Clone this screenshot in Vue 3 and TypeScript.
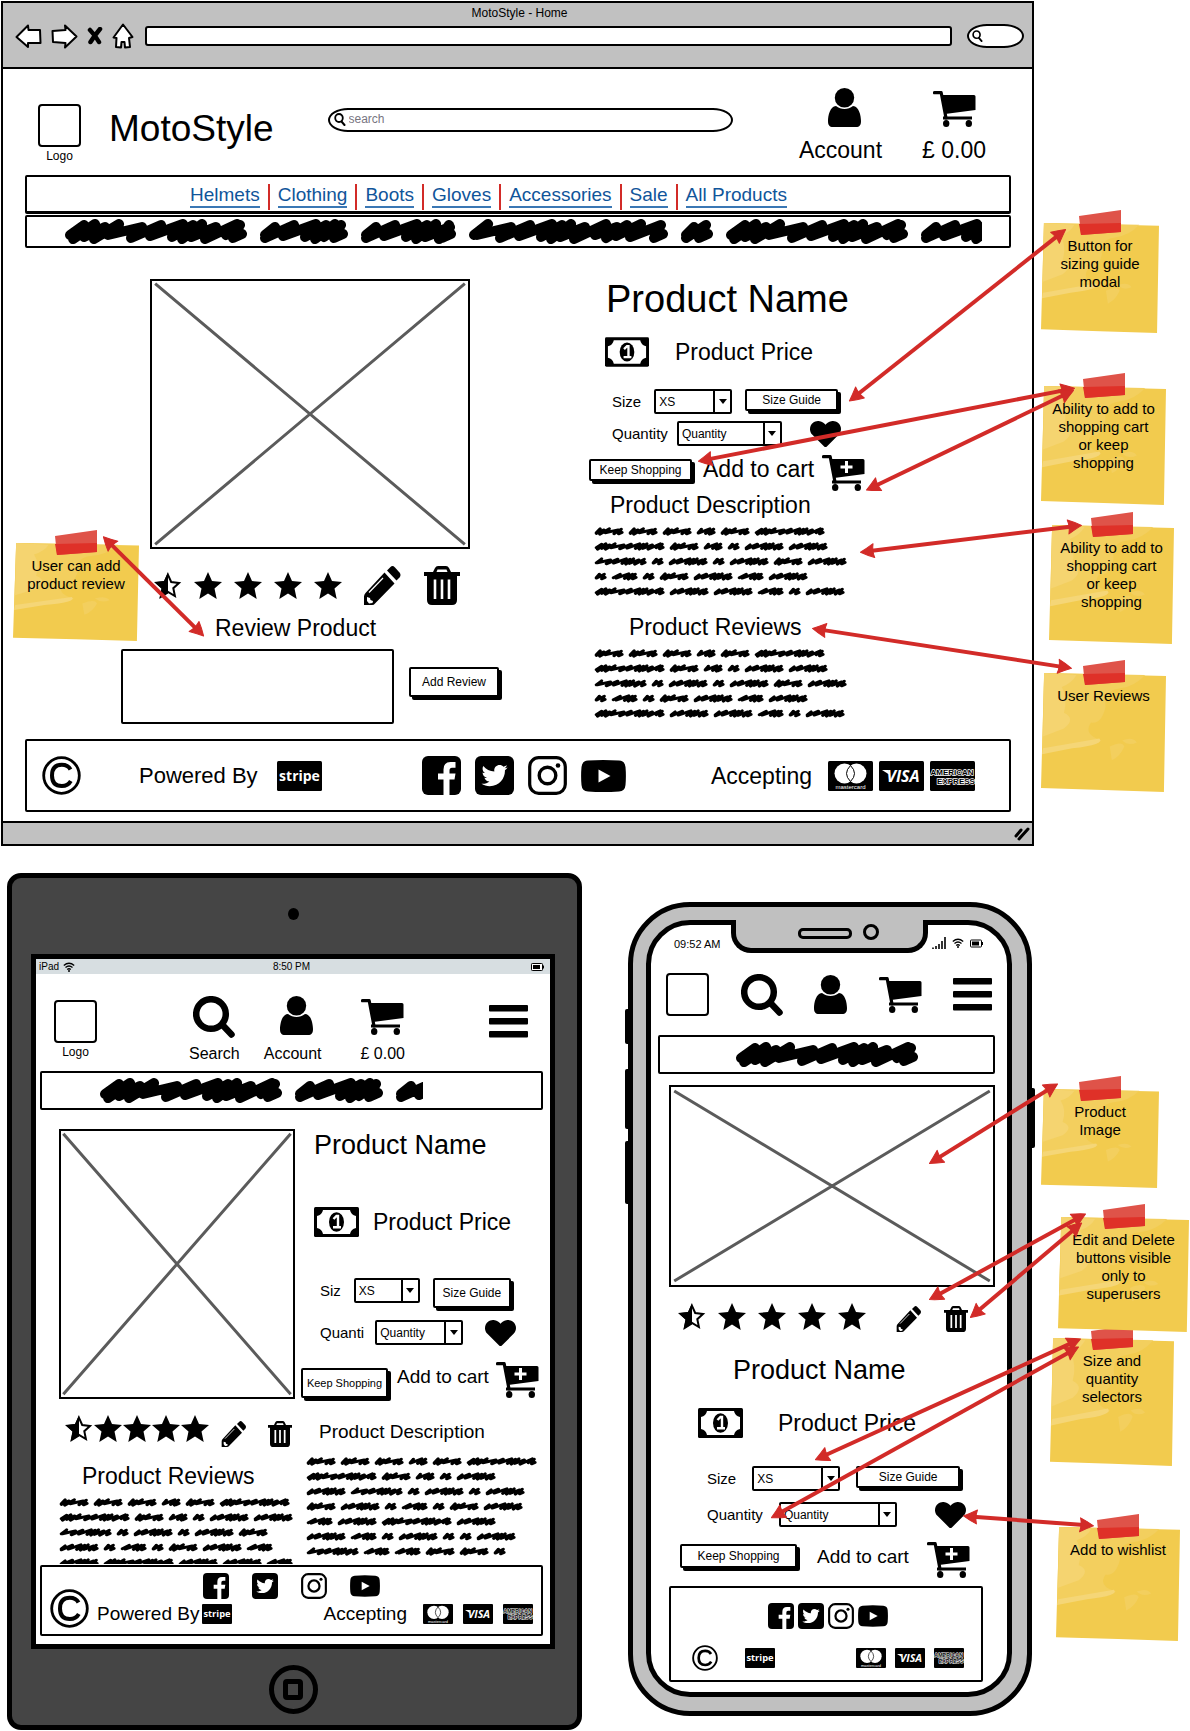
<script setup lang="ts">
import { h } from 'vue'
import type { FunctionalComponent } from 'vue'

interface Note {
  x: number
  y: number
  w: number
  h: number
  lines: string[]
}

const BOARD_WIDTH = 1190
const BOARD_HEIGHT = 1731

/* Inline icon taken from the sprite at the top of the template */
const Icon: FunctionalComponent<{ name: string; w: number; h: number }> = (p) =>
  h('svg', { width: p.w, height: p.h, 'aria-hidden': 'true', style: 'display:block;flex:none' }, [
    h('use', { href: `#i-${p.name}` }),
  ])
Icon.props = ['name', 'w', 'h']

/* Payment card: a black plate with the brand set in white */
const Card: FunctionalComponent<{ brand: string; small?: boolean }> = (p) => {
  const parts = [h('rect', { width: 45, height: 30, rx: 1.5 })]
  const label = (text: string, x: number, y: number, size: number, extra: Record<string, string | number> = {}) =>
    h(
      'text',
      { x, y, 'text-anchor': 'middle', 'font-size': size, 'font-weight': 700, fill: '#fff', 'font-family': 'Open Sans, sans-serif', ...extra },
      text,
    )
  if (p.brand === 'stripe') {
    parts.push(label('stripe', 22.5, 20, 14))
  } else if (p.brand === 'visa') {
    parts.push(h('path', { d: 'M3 9 H9 L11 14 Z', fill: '#fff' }), label('VISA', 24, 21, 16, { 'font-style': 'italic' }))
  } else if (p.brand === 'mastercard') {
    parts.push(
      h('circle', { cx: 16.5, cy: 12.5, r: 10, fill: '#fff' }),
      h('circle', { cx: 28.5, cy: 12.5, r: 10, fill: '#fff' }),
      h('path', { d: 'M22.500 4.500 Q14.500 12.500 22.500 20.500 Q30.500 12.500 22.500 4.500 Z', fill: '#fff', stroke: '#000' }),
      label('mastercard', 22.5, 28, 6, { 'font-weight': 400, 'font-family': 'Liberation Sans, sans-serif' }),
    )
  } else {
    const outlined = { fill: '#000', stroke: '#fff', 'stroke-width': 1.4, 'paint-order': 'stroke', 'font-family': 'Liberation Sans, sans-serif' }
    parts.push(label('AMERICAN', 22, 13.5, 8, outlined), label('EXPRESS', 26, 22.5, 8, outlined))
  }
  return h(
    'svg',
    { width: p.small ? 30 : 45, height: p.small ? 20 : 30, viewBox: '0 0 45 30', role: 'img', 'aria-label': p.brand, style: 'display:block;flex:none' },
    parts,
  )
}
Card.props = { brand: String, small: Boolean }

/* One scribbled word: a slanted zigzag drawn with a thick round pen */
const steps: number[] = [21, 11, 10, 14, 23, 19, 22, 10, 9, 14]
const tops: number[] = [5, 6, 5, 8, 5, 8, 6]
const bottoms: number[] = [18, 20, 18, 20, 16, 19, 17]
function scribblePath(width: number, seed: number): string {
  let d = 'M6 16'
  let x = width < 60 ? 14 : 24 - (seed % 3) * 4
  let i = seed
  while (x < width - 5) {
    d += ` L${x} ${tops[i % 7]} L${Math.max(6, x - 11)} ${bottoms[i % 7]}`
    x += steps[i % steps.length]
    i++
  }
  return `${d} L${width - 7} 6 L${width - 14} 19 L${width - 5} 15`
}
const Word: FunctionalComponent<{ w: number; small?: boolean }> = (p) => {
  const full = p.small ? Math.round(p.w * 2.6) : p.w
  return h(
    'svg',
    {
      width: p.w,
      height: p.small ? 9 : 25,
      viewBox: `0 0 ${full} 25`,
      preserveAspectRatio: 'none',
      'aria-hidden': 'true',
      style: 'display:block;flex:none',
    },
    [
      h('path', {
        d: scribblePath(full, p.w % 7),
        fill: 'none',
        stroke: '#000',
        'stroke-width': p.small ? 8 : 10,
        'stroke-linecap': 'round',
        'stroke-linejoin': 'round',
      }),
    ],
  )
}
Word.props = { w: Number, small: Boolean }

const Paragraph: FunctionalComponent<{ lines: number[][] }> = (p) =>
  h(
    'div',
    { role: 'presentation' },
    p.lines.map((line) =>
      h(
        'div',
        { style: 'display:flex;align-items:center;gap:4px;height:15px' },
        line.map((w) => h(Word, { w, small: true })),
      ),
    ),
  )
Paragraph.props = ['lines']

const links: string[] = ['Helmets', 'Clothing', 'Boots', 'Gloves', 'Accessories', 'Sale', 'All Products']

const desktopText: number[][] = [
  [30, 30, 30, 20, 30, 71],
  [71, 30, 20, 13, 40, 40],
  [53, 13, 40, 13, 40, 30, 40],
  [13, 27, 13, 30, 40, 27, 40],
  [71, 40, 40, 27, 13, 40],
]
const tabletText: number[][] = [
  [30, 30, 30, 20, 30, 71],
  [71, 30, 20, 13, 40],
  [40, 53, 13, 40, 13, 40],
  [30, 40, 13, 27, 13, 30, 40],
  [27, 40, 71, 40],
  [40, 27, 13, 40, 13, 13, 40],
  [53, 27, 27, 30, 30, 13],
]
const tabletReviews: number[][] = [
  [30, 30, 30, 20, 30, 71],
  [71, 30, 20, 13, 40, 40],
  [53, 13, 40, 13, 40, 30],
  [40, 13, 27, 13, 30, 40, 27],
  [40, 71, 40, 40, 27],
]

const notes: Note[] = [
  { x: 1041, y: 223, w: 118, h: 110, lines: ['Button for', 'sizing guide', 'modal'] },
  { x: 1041, y: 386, w: 125, h: 119, lines: ['Ability to add to', 'shopping cart', 'or keep', 'shopping'] },
  { x: 1049, y: 525, w: 125, h: 119, lines: ['Ability to add to', 'shopping cart', 'or keep', 'shopping'] },
  { x: 1041, y: 673, w: 125, h: 119, lines: ['User Reviews'] },
  { x: 13, y: 543, w: 126, h: 98, lines: ['User can add', 'product review'] },
  { x: 1041, y: 1089, w: 118, h: 99, lines: ['Product', 'Image'] },
  { x: 1050, y: 1338, w: 124, h: 128, lines: ['Size and', 'quantity', 'selectors'] },
  { x: 1058, y: 1217, w: 131, h: 115, lines: ['Edit and Delete', 'buttons visible', 'only to', 'superusers'] },
  { x: 1056, y: 1527, w: 124, h: 114, lines: ['Add to wishlist'] },
]

const arrowTips: number[][] = [
  [849, 401, 1066, 229],
  [698, 461, 1075, 388],
  [866, 490, 1074, 390],
  [860, 552, 1082, 525],
  [812, 628, 1072, 668],
  [103, 536, 204, 636],
  [929, 1163, 1058, 1083],
  [929, 1299, 1086, 1213],
  [970, 1317, 1082, 1222],
  [815, 1459, 1081, 1338],
  [771, 1517, 1079, 1346],
  [963, 1515, 1094, 1525],
]
/* The line stops inside each head so that the tip stays sharp */
const arrows = arrowTips.map(([x1, y1, x2, y2]) => {
  const len = Math.hypot(x2 - x1, y2 - y1)
  const ux = ((x2 - x1) / len) * 10
  const uy = ((y2 - y1) / len) * 10
  return { x1: x1 + ux, y1: y1 + uy, x2: x2 - ux, y2: y2 - uy }
})

function notePlace(n: Note) {
  return {
    left: `${(n.x / BOARD_WIDTH) * 100}%`,
    top: `${n.y}px`,
    width: `${n.w}px`,
    height: `${n.h}px`,
  }
}
</script>

<template>
  <main class="board">
    <svg class="sprite" width="0" height="0" aria-hidden="true">
      <symbol id="i-back" viewBox="0 0 27 25">
        <path d="M1.500 13 L13 1.500 L13.500 6 L25 6 L25.500 19 L13 19 L13 23 Z" fill="#fff" stroke="#000" stroke-width="2" stroke-linejoin="round" />
      </symbol>
      <symbol id="i-forward" viewBox="0 0 27 25">
        <path d="M25.500 12.500 L14 1.500 L14.500 6 L1.500 7 L2 18 L14.500 19 L14 23.500 Z" fill="#fff" stroke="#000" stroke-width="2" stroke-linejoin="round" />
      </symbol>
      <symbol id="i-stop" viewBox="0 0 16 18">
        <path d="M3 3 Q8 8 12 15 M13 2 Q8 8 3.500 15" fill="none" stroke="#000" stroke-width="4.500" stroke-linecap="round" />
      </symbol>
      <symbol id="i-home" viewBox="0 0 22 26">
        <path d="M11 1.500 L20.500 14 L17 15 L18 24 L13 24.500 L12.500 19 L9.500 19 L9 24.500 L4 24 L4.500 15 L1.500 14.500 Z" fill="#fff" stroke="#000" stroke-width="2" stroke-linejoin="round" />
      </symbol>
      <symbol id="i-lens" viewBox="0 0 12 13">
        <ellipse cx="5" cy="5" rx="3.800" ry="4" fill="none" stroke="#000" stroke-width="1.800" />
        <path d="M7.500 8.500 L10.500 12" stroke="#000" stroke-width="2" stroke-linecap="round" />
      </symbol>
      <symbol id="i-search" viewBox="0 0 42 42">
        <circle cx="18" cy="18" r="14.800" fill="none" stroke="#000" stroke-width="6.500" />
        <path d="M30 29.500 L38.500 38.500" stroke="#000" stroke-width="6.500" stroke-linecap="round" />
      </symbol>
      <symbol id="i-account" viewBox="0 0 33 39">
        <ellipse cx="16.500" cy="9.800" rx="9.700" ry="9.800" />
        <path d="M8 18 C2 18 0 28 0 33 C0 37 1.500 39 5 39 H28 C31.500 39 33 37 33 33 C33 28 31 18 25 18 C20 22 13 22 8 18 Z" />
      </symbol>
      <symbol id="i-cart" viewBox="0 0 43 36">
        <path d="M1.500 1.700 H8.200 L13 27" fill="none" stroke="#000" stroke-width="3.200" stroke-linecap="round" stroke-linejoin="round" />
        <path d="M8 4 H41 Q42.500 4 42.500 5.500 V19 L12 23 Z M10 25.500 H39 V28.500 H10 Z" />
        <ellipse cx="13.200" cy="32.500" rx="3.200" ry="3.500" />
        <ellipse cx="35.800" cy="32.500" rx="3.200" ry="3.500" />
      </symbol>
      <symbol id="i-cart-plus" viewBox="0 0 43 36">
        <use href="#i-cart" />
        <path d="M24.500 6 V18 M18.500 12 H30.500" stroke="#fff" stroke-width="3" />
      </symbol>
      <symbol id="i-menu" viewBox="0 0 39 33">
        <rect width="39" height="6.600" rx="1" />
        <rect y="13" width="39" height="6.600" rx="1" />
        <rect y="26" width="39" height="6.600" rx="1" />
      </symbol>
      <symbol id="i-star" viewBox="0 0 28 27">
        <path d="M14 0 L18 9 L28 10 L20.500 16.500 L22.700 27 L14 21.500 L5.300 27 L7.500 16.500 L0 10 L10 9 Z" />
      </symbol>
      <symbol id="i-star-half" viewBox="0 0 28 27">
        <path d="M14 2.800 L17.200 10 L25 11 L19.300 16.200 L20.900 24 L14 19.800 L7.100 24 L8.700 16.200 L3 11 L10.800 10 Z" fill="#fff" stroke="#000" stroke-width="2" />
        <path d="M14 0 V21.500 L5.300 27 L7.500 16.500 L0 10 L10 9 Z" />
      </symbol>
      <symbol id="i-pencil" viewBox="0 0 39 39">
        <path d="M24 4.500 L27.500 1 Q29.500 -1 32 1.500 L36.500 6.500 Q38.500 9 36.500 11.500 L33.500 14.500 Z" />
        <path d="M21.500 6.500 L31.500 17.500 L12 37.500 Q11 39 9 39 L1 39 L1 30.500 Q1 28.500 2.500 27 Z" />
        <path d="M6 26.500 L20 12" stroke="#fff" stroke-width="1.200" />
        <path d="M4 31 L7 32 L7.500 34 L10 35 L9.500 37 L6 37.500 L4 35 Z" fill="#fff" />
      </symbol>
      <symbol id="i-trash" viewBox="0 0 36 39">
        <path d="M0 6 H9 L11 2 Q12 0 14 0 H22 Q24 0 25 2 L27 6 H36 V10 H33 V34 Q33 39 28 39 H8 Q3 39 3 34 V10 H0 Z" />
        <path d="M12.500 6 L13.500 3.500 H22.500 L23.500 6 Z" fill="#fff" />
        <path d="M11 13.500 V33 M18 13.500 V33 M25 13.500 V33" stroke="#fff" stroke-width="2.600" />
      </symbol>
      <symbol id="i-heart" viewBox="0 32 512 448" preserveAspectRatio="none">
        <path d="M462.300 62.600C407.500 15.900 326 24.300 275.700 76.200L256 96.500l-19.700-20.300C186.100 24.300 104.500 15.900 49.700 62.600c-62.800 53.600-66.100 149.800-9.900 207.900l193.500 199.800c12.500 12.900 32.800 12.900 45.300 0l193.500-199.800c56.300-58.100 53-154.300-9.800-207.900z" />
      </symbol>
      <symbol id="i-money" viewBox="0 0 45 30">
        <rect width="45" height="30" rx="1.500" />
        <path d="M9 3 H36 Q37 8 42 9 V21 Q37 22 36 27 H9 Q8 22 3 21 V9 Q8 8 9 3 Z" fill="#fff" />
        <ellipse cx="22.500" cy="15" rx="7.500" ry="9.800" />
        <path d="M19.500 12 L22.500 9 H24 V20 M19 20.300 H27" fill="none" stroke="#fff" stroke-width="2.400" />
      </symbol>
      <symbol id="i-copyright" viewBox="0 0 39 39">
        <circle cx="19.500" cy="19.500" r="17.800" fill="none" stroke="#000" stroke-width="2.800" />
        <path d="M28.500 13.500 Q26 8.800 19.800 8.800 Q10 8.800 10 19.500 Q10 30 19.800 30 Q26 30 28.800 25" fill="none" stroke="#000" stroke-width="4" />
      </symbol>
      <symbol id="i-facebook" viewBox="0 0 39 39">
        <rect width="39" height="39" rx="6" />
        <path d="M21.500 39 V23.500 H16 V17.500 H21.500 V13.500 Q21.500 6 28.500 6 H33.500 V11.800 H30 Q27.500 11.800 27.500 14.500 V17.500 H33.500 L32.500 23.500 H27.500 V39 Z" fill="#fff" />
      </symbol>
      <symbol id="i-twitter" viewBox="0 0 39 39">
        <rect width="39" height="39" rx="6" />
        <path transform="translate(6.500 6.500) scale(0.051)" fill="#fff" d="M459.370 151.716c.325 4.548.325 9.097.325 13.645 0 138.720-105.583 298.558-298.558 298.558-59.452 0-114.680-17.219-161.137-47.106 8.447.974 16.568 1.299 25.340 1.299 49.055 0 94.213-16.568 130.274-44.832-46.132-.975-84.792-31.188-98.112-72.772 6.498.974 12.995 1.624 19.818 1.624 9.421 0 18.843-1.300 27.614-3.573-48.081-9.747-84.143-51.980-84.143-102.985v-1.299c13.969 7.797 30.214 12.670 47.431 13.319-28.264-18.843-46.781-51.005-46.781-87.391 0-19.492 5.197-37.360 14.294-52.954 51.655 63.675 129.300 105.258 216.365 109.807-1.624-7.797-2.599-15.918-2.599-24.040 0-57.828 46.782-104.934 104.934-104.934 30.213 0 57.502 12.670 76.670 33.137 23.715-4.548 46.456-13.320 66.599-25.340-7.798 24.366-24.366 44.833-46.132 57.827 21.117-2.273 41.584-8.122 60.426-16.243-14.292 20.791-32.161 39.308-52.628 54.253z" />
      </symbol>
      <symbol id="i-instagram" viewBox="0 0 39 39">
        <rect x="1.700" y="1.700" width="35.600" height="35.600" rx="9" fill="none" stroke="#000" stroke-width="3.200" />
        <circle cx="19.500" cy="19.500" r="8.300" fill="none" stroke="#000" stroke-width="3.400" />
        <circle cx="30" cy="9.500" r="2.300" />
      </symbol>
      <symbol id="i-youtube" viewBox="0 0 45 32">
        <path d="M7 .500 Q22 -.500 38 .500 Q44 1 44.500 7 Q45.300 16 44.500 25 Q44 31 38 31.500 Q22 32.500 7 31.500 Q1 31 .500 25 Q-.300 16 .500 7 Q1 1 7 .500 Z" />
        <path d="M17.500 9.500 L29.500 16 L17.500 22.500 Z" fill="#fff" />
      </symbol>
      <symbol id="i-wifi" viewBox="0 0 12 10">
        <path d="M.800 3.500 Q6 -1 11.200 3.500 M2.500 5.500 Q6 2.500 9.500 5.500 M4.200 7.500 Q6 6 7.800 7.500" fill="none" stroke="#000" stroke-width="1.300" />
        <circle cx="6" cy="9" r="1" />
      </symbol>
      <symbol id="i-battery" viewBox="0 0 13 8">
        <rect x=".500" y=".500" width="11" height="7" rx=".800" fill="#fff" stroke="#000" />
        <rect x="2" y="2" width="7" height="4" />
        <path d="M12.500 2.500 V5.500" stroke="#000" />
      </symbol>
      <symbol id="i-signal" viewBox="0 0 14 12">
        <path d="M1 10.500 V12 M4 9 V12 M7 7 V12 M10 4 V12 M13 0 V12" stroke="#000" stroke-width="1.600" />
      </symbol>
    </svg>

    <section class="browser" aria-label="Desktop wireframe">
      <header class="chrome">
        <div class="chrome-title">MotoStyle - Home</div>
        <div class="toolbar">
          <button class="bare" aria-label="Back"><Icon name="back" :w="27" :h="25" /></button>
          <button class="bare" aria-label="Forward"><Icon name="forward" :w="27" :h="25" /></button>
          <button class="bare" aria-label="Stop"><Icon name="stop" :w="16" :h="18" /></button>
          <button class="bare" aria-label="Home"><Icon name="home" :w="22" :h="26" /></button>
          <input class="address" type="text" aria-label="Address" />
          <label class="chrome-search"><Icon name="lens" :w="11" :h="12" /><input type="text" aria-label="Web search" /></label>
        </div>
      </header>

      <div class="page">
        <header class="masthead">
          <div class="logo"><div class="logo-box"></div>Logo</div>
          <h1 class="brand">MotoStyle</h1>
          <label class="search"><Icon name="lens" :w="12" :h="13" /><input type="text" placeholder="search" aria-label="Search" /></label>
          <div class="tool account"><Icon name="account" :w="33" :h="39" /><span>Account</span></div>
          <div class="tool basket"><Icon name="cart" :w="43" :h="36" /><span>£ 0.00</span></div>
        </header>

        <nav class="frame nav">
          <a v-for="link in links" :key="link" href="#"><span>{{ link }}</span></a>
        </nav>
        <div class="frame banner">
          <div class="banner-text">
            <Word v-for="(w, i) in [183, 89, 96, 200, 33, 183, 96]" :key="i" :w="w" />
          </div>
        </div>

        <div class="product">
          <div class="gallery">
            <svg class="image" viewBox="0 0 100 100" preserveAspectRatio="none" role="img" aria-label="Product image">
              <path d="M1 1 L99 99 M99 1 L1 99" />
            </svg>
            <div class="rating">
              <Icon name="star-half" :w="28" :h="27" />
              <Icon v-for="n in 4" :key="n" name="star" :w="28" :h="27" />
              <button class="bare edit" aria-label="Edit"><Icon name="pencil" :w="39" :h="39" /></button>
              <button class="bare delete" aria-label="Delete"><Icon name="trash" :w="36" :h="39" /></button>
            </div>
            <h3 class="heading"><label for="review">Review Product</label></h3>
            <div class="review-form">
              <textarea id="review"></textarea>
              <button class="btn">Add Review</button>
            </div>
          </div>

          <div class="details">
            <h2 class="name">Product Name</h2>
            <div class="price"><Icon name="money" :w="44" :h="30" />Product Price</div>
            <div class="field">
              <label for="d-size">Size</label>
              <span class="select size"><select id="d-size"><option>XS</option></select><i></i></span>
              <button class="btn">Size Guide</button>
            </div>
            <div class="field quantity">
              <label for="d-qty">Quantity</label>
              <span class="select"><select id="d-qty"><option>Quantity</option></select><i></i></span>
              <button class="bare wish" aria-label="Add to wishlist"><Icon name="heart" :w="31" :h="26" /></button>
            </div>
            <div class="buy">
              <button class="btn">Keep Shopping</button>
              <span>Add to cart</span>
              <button class="bare" aria-label="Add to cart"><Icon name="cart-plus" :w="43" :h="36" /></button>
            </div>
            <h3 class="heading description">Product Description</h3>
            <Paragraph class="text" :lines="desktopText" />
            <h3 class="heading reviews">Product Reviews</h3>
            <Paragraph class="text" :lines="desktopText" />
          </div>
        </div>

        <footer class="frame footer">
          <div class="powered">
            <Icon name="copyright" :w="39" :h="39" />
            <span>Powered By</span>
            <Card brand="stripe" />
          </div>
          <div class="social">
            <Icon name="facebook" :w="39" :h="39" />
            <Icon name="twitter" :w="39" :h="39" />
            <Icon name="instagram" :w="39" :h="39" />
            <Icon name="youtube" :w="45" :h="32" />
          </div>
          <div class="accepting">
            <span>Accepting</span>
            <Card brand="mastercard" />
            <Card brand="visa" />
            <Card brand="amex" />
          </div>
        </footer>
      </div>
      <div class="status-strip">
        <svg width="16" height="14" viewBox="0 0 16 14" aria-hidden="true">
          <path d="M2 9 L7 3 M5 12 L14 2" stroke="#000" stroke-width="3" stroke-linecap="round" />
        </svg>
      </div>
    </section>

    <div class="devices">
      <section class="tablet" aria-label="Tablet wireframe">
        <div class="camera"></div>
        <div class="screen">
          <div class="status">
            <span class="carrier">iPad <Icon name="wifi" :w="12" :h="10" /></span>
            <span>8:50 PM</span>
            <span class="power"><Icon name="battery" :w="13" :h="8" /></span>
          </div>
          <header class="masthead">
            <div class="logo"><div class="logo-box"></div>Logo</div>
            <div class="tool find"><Icon name="search" :w="42" :h="42" /><span>Search</span></div>
            <div class="tool account"><Icon name="account" :w="33" :h="39" /><span>Account</span></div>
            <div class="tool basket"><Icon name="cart" :w="43" :h="36" /><span>£ 0.00</span></div>
            <button class="bare menu" aria-label="Menu"><Icon name="menu" :w="39" :h="33" /></button>
          </header>
          <div class="frame banner">
            <div class="banner-text"><Word v-for="w in [183, 89, 96]" :key="w" :w="w" /></div>
          </div>
          <div class="product">
            <div class="gallery">
              <svg class="image" viewBox="0 0 100 100" preserveAspectRatio="none" role="img" aria-label="Product image">
                <path d="M1 1 L99 99 M99 1 L1 99" />
              </svg>
              <div class="rating">
                <Icon name="star-half" :w="28" :h="27" />
                <Icon v-for="n in 4" :key="n" name="star" :w="28" :h="27" />
                <button class="bare edit" aria-label="Edit"><Icon name="pencil" :w="26" :h="26" /></button>
                <button class="bare delete" aria-label="Delete"><Icon name="trash" :w="24" :h="26" /></button>
              </div>
              <h3 class="heading">Product Reviews</h3>
              <Paragraph class="text" :lines="tabletReviews" />
            </div>
            <div class="details">
              <h2 class="name">Product Name</h2>
              <div class="price"><Icon name="money" :w="45" :h="30" />Product Price</div>
              <div class="field">
                <label for="t-size">Siz</label>
                <span class="select size"><select id="t-size"><option>XS</option></select><i></i></span>
                <button class="btn">Size Guide</button>
              </div>
              <div class="field quantity">
                <label for="t-qty">Quanti</label>
                <span class="select"><select id="t-qty"><option>Quantity</option></select><i></i></span>
                <button class="bare wish" aria-label="Add to wishlist"><Icon name="heart" :w="31" :h="26" /></button>
              </div>
              <div class="buy">
                <button class="btn">Keep Shopping</button>
                <span>Add to cart</span>
                <button class="bare" aria-label="Add to cart"><Icon name="cart-plus" :w="43" :h="36" /></button>
              </div>
              <h3 class="heading description">Product Description</h3>
              <Paragraph class="text" :lines="tabletText" />
            </div>
          </div>
          <footer class="frame footer">
            <Icon name="copyright" :w="39" :h="39" />
            <div class="footer-rows">
              <div class="social">
                <Icon name="facebook" :w="26" :h="26" />
                <Icon name="twitter" :w="26" :h="26" />
                <Icon name="instagram" :w="26" :h="26" />
                <Icon name="youtube" :w="30" :h="22" />
              </div>
              <div class="payments">
                <div class="payment-group by"><span>Powered By</span><Card brand="stripe" small /></div>
                <div class="payment-group">
                  <span class="accept">Accepting</span>
                  <Card brand="mastercard" small />
                  <Card brand="visa" small />
                  <Card brand="amex" small />
                </div>
              </div>
            </div>
          </footer>
        </div>
        <div class="home-key"><i></i></div>
      </section>

      <section class="phone" aria-label="Phone wireframe">
        <i class="side-key first"></i><i class="side-key second"></i><i class="side-key third"></i><i class="side-key lock"></i>
        <div class="screen">
          <div class="status">
            <span class="time">09:52 AM</span>
            <div class="notch"><i class="speaker"></i><i class="lens"></i></div>
            <span class="signals">
              <Icon name="signal" :w="14" :h="12" /><Icon name="wifi" :w="12" :h="10" /><Icon name="battery" :w="13" :h="9" />
            </span>
          </div>
          <header class="masthead">
            <div class="logo-box"></div>
            <Icon name="search" :w="42" :h="42" />
            <Icon name="account" :w="33" :h="39" />
            <Icon name="cart" :w="43" :h="36" />
            <button class="bare" aria-label="Menu"><Icon name="menu" :w="39" :h="33" /></button>
          </header>
          <div class="frame banner"><Word :w="183" /></div>
          <svg class="image" viewBox="0 0 100 100" preserveAspectRatio="none" role="img" aria-label="Product image">
            <path d="M1 2 L99 98 M99 2 L1 98" />
          </svg>
          <div class="rating">
            <Icon name="star-half" :w="28" :h="27" />
            <Icon v-for="n in 4" :key="n" name="star" :w="28" :h="27" />
            <button class="bare edit" aria-label="Edit"><Icon name="pencil" :w="26" :h="26" /></button>
            <button class="bare delete" aria-label="Delete"><Icon name="trash" :w="24" :h="26" /></button>
          </div>
          <h2 class="name">Product Name</h2>
          <div class="price"><Icon name="money" :w="45" :h="30" />Product Price</div>
          <div class="field">
            <label for="p-size">Size</label>
            <span class="select size"><select id="p-size"><option>XS</option></select><i></i></span>
            <button class="btn">Size Guide</button>
          </div>
          <div class="field quantity">
            <label for="p-qty">Quantity</label>
            <span class="select"><select id="p-qty"><option>Quantity</option></select><i></i></span>
            <button class="bare wish" aria-label="Add to wishlist"><Icon name="heart" :w="31" :h="26" /></button>
          </div>
          <div class="buy">
            <button class="btn">Keep Shopping</button>
            <span>Add to cart</span>
            <button class="bare" aria-label="Add to cart"><Icon name="cart-plus" :w="43" :h="36" /></button>
          </div>
          <footer class="frame footer">
            <div class="social">
              <Icon name="facebook" :w="26" :h="26" />
              <Icon name="twitter" :w="26" :h="26" />
              <Icon name="instagram" :w="26" :h="26" />
              <Icon name="youtube" :w="30" :h="22" />
            </div>
            <div class="payments">
              <Icon name="copyright" :w="26" :h="26" />
              <Card brand="stripe" small />
              <span class="cards">
                <Card brand="mastercard" small />
                <Card brand="visa" small />
                <Card brand="amex" small />
              </span>
            </div>
          </footer>
        </div>
      </section>
    </div>

    <aside v-for="(note, i) in notes" :key="i" class="note" :style="notePlace(note)">
      <svg class="paper" viewBox="0 0 120 120" preserveAspectRatio="none" aria-hidden="true">
        <path d="M3 0 L120 3 L118 120 L60 118 L0 116 Z" fill="#f2cb4e" />
        <path d="M3 0 L100 2 Q90 14 74 16 Q60 18 62 34 Q58 52 48 50 Q40 62 58 68 Q52 74 34 72 L1 82 Z" fill="#f3cf5e" />
        <path d="M3 0 L34 2 Q30 10 20 14 Q26 26 22 40 Q34 46 22 56 L2 64 Z" fill="#f5d470" />
        <path d="M2 76 L56 66 Q62 72 30 76 L1 82 Z" fill="#f5d677" />
        <path d="M66 74 Q78 68 80 74 Q76 84 68 88 Z M78 68 Q88 64 92 70 Q84 74 78 68 Z" fill="#f3cf5e" />
      </svg>
      <svg class="tape" width="42" height="25" viewBox="0 0 42 25" aria-hidden="true">
        <path d="M0 6 L42 0 L42 22 L2 25 Z" fill="#df5349" />
        <path d="M0 14 L42 13 L42 22 L2 25 Z" fill="#df3128" />
      </svg>
      <p><span v-for="line in note.lines" :key="line">{{ line }}</span></p>
    </aside>

    <svg class="arrows" :viewBox="`0 0 ${BOARD_WIDTH} ${BOARD_HEIGHT}`" preserveAspectRatio="none" aria-hidden="true">
      <marker id="head" viewBox="0 0 16 16" refX="6" refY="8" markerWidth="16" markerHeight="16" markerUnits="userSpaceOnUse" orient="auto-start-reverse">
        <path d="M2 1 Q9 4 15.500 8 Q9 11 2 15 Q4 8 2 1 Z" fill="#d22b28" stroke="#d22b28" stroke-linejoin="round" />
      </marker>
      <line v-for="(a, i) in arrows" :key="i" v-bind="a" marker-start="url(#head)" marker-end="url(#head)" />
    </svg>
  </main>
</template>

<style>
body {
  margin: 0;
  background: #fff;
}
</style>

<style scoped>
.board,
.board * {
  box-sizing: border-box;
}
.board {
  position: relative;
  padding: 1px 0 2px 1px;
  overflow: hidden;
  background: #fff;
  color: #000;
  font-family: "Liberation Sans", Arial, sans-serif;
}
.sprite {
  position: absolute;
}
h1,
h2,
h3,
p {
  margin: 0;
  font-weight: 400;
}
button,
input,
select,
textarea {
  font: inherit;
  color: inherit;
}
.bare {
  flex: none;
  padding: 0;
  border: 0;
  background: none;
}
input {
  min-width: 0;
  padding: 0;
  border: 0;
  background: none;
  outline: 0;
}

/* Parts shared by the three devices */
.frame {
  border: 2px solid #000;
  border-radius: 2px;
  background: #fff;
}
.logo {
  display: flex;
  flex-direction: column;
  align-items: center;
  font-size: 12px;
  line-height: 18px;
}
.logo-box {
  flex: none;
  width: 43px;
  height: 43px;
  border: 2px solid #000;
  border-radius: 4px;
}
.tool {
  display: flex;
  flex-direction: column;
  align-items: center;
  justify-content: space-between;
  white-space: nowrap;
}
.account svg {
  margin-left: 8px;
}
.banner {
  display: flex;
  align-items: center;
}
.banner-text {
  display: flex;
  gap: 12px;
  overflow: hidden;
}
.image {
  display: block;
  border: 2px solid #000;
}
.image path {
  fill: none;
  stroke: #5b5b5b;
  stroke-width: 3;
  vector-effect: non-scaling-stroke;
}
.rating {
  display: flex;
}
.name,
.price,
.heading,
.buy {
  white-space: nowrap;
}
.heading {
  font-size: 23px;
  line-height: 28px;
}
.price {
  display: flex;
  align-items: center;
  font-size: 23px;
  line-height: 28px;
}
.field {
  display: flex;
  align-items: flex-start;
  font-size: 15px;
  line-height: 25px;
}
.select {
  display: flex;
  flex: none;
  height: 25px;
  border: 2px solid #000;
  border-radius: 2px;
  background: #fff;
}
.select select {
  flex: 1;
  min-width: 0;
  padding: 0 3px;
  border: 0;
  background: none;
  appearance: none;
  font-size: 12px;
  line-height: 18px;
}
.select i {
  display: flex;
  align-items: center;
  justify-content: center;
  width: 17px;
  border-left: 2px solid #000;
  pointer-events: none;
}
.select i::before {
  content: "";
  border: 4px solid transparent;
  border-top: 5px solid #000;
  border-bottom: 0;
}
.btn {
  flex: none;
  height: 22px;
  padding: 0;
  border: 2px solid #000;
  border-radius: 2px;
  background: #fff;
  box-shadow: 3px 3px 0 #000;
  font-size: 12px;
  line-height: 16px;
  white-space: nowrap;
}
.buy {
  display: flex;
  align-items: flex-start;
}
.social,
.payments {
  display: flex;
  align-items: center;
}

/* Browser window */
.browser {
  margin-right: 156px;
  border: 2px solid #000;
}
.chrome {
  padding: 2px 8px 18px 12px;
  border-bottom: 2px solid #000;
  background: #c1c1c1;
}
.chrome-title {
  font-size: 12px;
  line-height: 16px;
  text-align: center;
}
.toolbar {
  display: flex;
  align-items: center;
  gap: 9px;
  margin-top: 2px;
}
.address {
  flex: 1;
  height: 20px;
  margin-left: 2px;
  border: 2px solid #000;
  border-radius: 3px;
  background: #fff;
}
.chrome-search {
  display: flex;
  align-items: center;
  width: 57px;
  height: 24px;
  margin-left: 6px;
  padding-left: 3px;
  border: 2px solid #000;
  border-radius: 20px / 12px;
  background: #fff;
}
.chrome-search input {
  width: 30px;
}
.page {
  padding: 0 21px 9px 22px;
}
.browser .masthead {
  display: flex;
  align-items: flex-start;
  height: 106px;
  padding: 19px 25px 0 13px;
}
.browser .logo {
  margin-top: 16px;
}
.brand {
  margin: 19px 54px 0 28px;
  font-size: 37px;
  line-height: 44px;
}
.search {
  display: flex;
  flex: 1;
  align-items: center;
  gap: 3px;
  height: 24px;
  margin: 20px 66px 0 0;
  padding: 0 4px 2px;
  border: 2px solid #000;
  border-radius: 20px / 12px;
}
.search input {
  flex: 1;
  font-size: 12px;
  line-height: 16px;
}
.search input::placeholder {
  color: #77757f;
  opacity: 1;
}
.browser .tool {
  height: 76px;
  font-size: 23px;
  line-height: 28px;
}
.browser .basket {
  margin-left: 40px;
  padding-top: 3px;
}
.nav {
  display: flex;
  height: 39px;
  padding: 7px 0 0 155px;
  border-bottom-width: 3px;
  font-size: 19px;
  line-height: 22px;
}
.nav a {
  height: 26px;
  padding: 0 8px;
  color: #10559a;
  text-decoration: none;
  white-space: nowrap;
}
.nav a + a {
  border-left: 2px solid #d22b28;
}
.nav span {
  display: block;
  border-bottom: 2px solid #3a77b4;
}
.browser .banner {
  height: 33px;
  margin-top: 1px;
  padding: 0 27px 0 37px;
}
.browser .product {
  display: grid;
  grid-template-columns: minmax(0, 564fr) minmax(0, 422fr);
}
.browser .gallery {
  padding-top: 31px;
}
.browser .image {
  width: 320px;
  height: 270px;
  margin-left: 125px;
}
.browser .rating {
  align-items: center;
  gap: 12px;
  margin: 17px 0 0 129px;
}
.browser .edit {
  margin-left: 9px;
}
.browser .delete {
  margin-left: 10px;
}
.browser .gallery .heading {
  margin: 9px 0 0 190px;
}
.review-form {
  display: flex;
  gap: 15px;
  margin: 7px 0 0 96px;
}
.review-form textarea {
  width: 273px;
  height: 75px;
  border: 2px solid #000;
  border-radius: 2px;
  resize: none;
}
.review-form .btn {
  width: 90px;
  height: 30px;
  margin-top: 18px;
}
.browser .name {
  margin: 29px 0 0 17px;
  font-size: 38px;
  line-height: 44px;
}
.browser .price {
  gap: 26px;
  margin: 16px 0 0 16px;
}
.browser .field {
  gap: 13px;
  margin: 22px 0 0 23px;
}
.browser .size {
  width: 78px;
}
.browser .field .btn {
  width: 93px;
}
.browser .quantity {
  gap: 9px;
  margin-top: 7px;
}
.browser .quantity .select {
  width: 105px;
}
.browser .wish {
  margin-left: 19px;
}
.browser .buy {
  gap: 8px;
  margin-top: 8px;
  font-size: 23px;
  line-height: 28px;
}
.browser .buy .btn {
  width: 103px;
  margin: 4px 3px 0 0;
}
.browser .description {
  margin-left: 21px;
}
.browser .reviews {
  margin: 14px 0 0 40px;
}
.browser .text {
  margin: 5px 0 0 5px;
}
.browser .footer {
  display: flex;
  align-items: center;
  justify-content: space-between;
  height: 73px;
  margin-top: 15px;
  padding: 0 34px 0 15px;
  font-size: 22px;
  line-height: 28px;
}
.powered,
.accepting {
  display: flex;
  align-items: center;
  white-space: nowrap;
}
.powered span {
  margin: 0 19px 0 58px;
}
.browser .social {
  gap: 14px;
  margin-left: 16px;
}
.accepting {
  gap: 6px;
  font-size: 23px;
}
.accepting span {
  margin-right: 10px;
}
.status-strip {
  display: flex;
  align-items: center;
  justify-content: flex-end;
  height: 23px;
  padding-right: 2px;
  border-top: 2px solid #000;
  background: #c1c1c1;
}

/* Tablet and phone side by side */
.devices {
  display: grid;
  grid-template-columns: minmax(0, 575fr) minmax(0, 404fr);
  align-items: start;
  gap: 46px;
  margin: 27px 158px 0 6px;
}
.tablet {
  display: flex;
  flex-direction: column;
  align-items: center;
  padding: 30px 22px 11px 19px;
  border: 5px solid #000;
  border-radius: 14px;
  background: #454545;
}
.camera {
  width: 11px;
  height: 12px;
  border-radius: 50%;
  background: #000;
}
.tablet .screen {
  width: 100%;
  margin-top: 34px;
  padding-bottom: 8px;
  border: 5px solid #000;
  background: #fff;
}
.tablet .status {
  display: grid;
  grid-template-columns: 1fr auto 1fr;
  align-items: center;
  height: 15px;
  padding: 0 6px 0 3px;
  background: #d7dee1;
  font-size: 10px;
  line-height: 15px;
}
.carrier {
  display: flex;
  align-items: center;
  gap: 4px;
}
.power {
  justify-self: end;
}
.tablet .masthead {
  display: flex;
  align-items: flex-start;
  height: 97px;
  padding: 22px 22px 0 18px;
}
.tablet .logo {
  margin-top: 4px;
}
.tablet .tool {
  height: 68px;
  font-size: 16px;
  line-height: 20px;
}
.find {
  margin: 0 24px 0 92px;
}
.tablet .basket {
  margin-left: 39px;
  padding-top: 3px;
}
.menu {
  margin: 9px 0 0 auto;
}
.tablet .banner {
  height: 39px;
  margin: 0 7px 0 4px;
  padding-left: 57px;
}
.tablet .banner-text {
  width: 324px;
}
.tablet .product {
  display: grid;
  grid-template-columns: minmax(0, 265fr) minmax(0, 249fr);
  height: 455px;
}
.tablet .gallery {
  padding: 19px 6px 0 23px;
}
.tablet .image {
  width: 100%;
  height: 270px;
}
.tablet .rating {
  align-items: flex-start;
  gap: 1px;
  margin: 16px 0 0 6px;
}
.tablet .edit {
  margin: 6px 0 0 11px;
}
.tablet .delete {
  margin: 6px 0 0 20px;
}
.tablet .gallery .heading {
  margin: 15px 0 0 23px;
}
.tablet .gallery .text {
  height: 69px;
  margin-top: 5px;
  overflow: hidden;
}
.tablet .name {
  margin: 19px 0 0 13px;
  font-size: 27px;
  line-height: 32px;
}
.tablet .price {
  gap: 14px;
  margin: 46px 0 0 13px;
}
.tablet .field {
  gap: 13px;
  margin: 41px 0 0 19px;
}
.tablet .size {
  width: 66px;
}
.tablet .field .btn {
  width: 78px;
  height: 30px;
}
.tablet .quantity {
  gap: 11px;
  margin-top: 12px;
}
.tablet .quantity .select {
  width: 88px;
}
.tablet .wish {
  margin-left: 11px;
}
.tablet .buy {
  gap: 7px;
  margin-top: 16px;
  font-size: 19px;
  line-height: 30px;
}
.tablet .buy .btn {
  width: 87px;
  height: 30px;
  margin: 6px 2px 0 0;
  font-size: 11px;
}
.tablet .description {
  margin: 20px 0 0 18px;
  font-size: 19px;
}
.tablet .details .text {
  margin: 8px 0 0 5px;
}
.tablet .footer {
  display: flex;
  align-items: flex-end;
  gap: 8px;
  height: 71px;
  margin: 0 7px 0 4px;
  padding: 6px 8px 6px;
}
.footer-rows {
  flex: 1;
}
.tablet .social {
  gap: 23px;
  padding-left: 106px;
}
.tablet .payments {
  justify-content: space-between;
  font-size: 19px;
  line-height: 29px;
  white-space: nowrap;
}
.payment-group {
  display: flex;
  align-items: center;
  gap: 10px;
}
.payment-group.by {
  gap: 3px;
}
.accept {
  margin-right: 6px;
}
.home-key {
  display: flex;
  align-items: center;
  justify-content: center;
  width: 49px;
  height: 49px;
  margin-top: 16px;
  border: 5px solid #000;
  border-radius: 50%;
}
.home-key i {
  width: 20px;
  height: 21px;
  border: 5px solid #000;
  border-radius: 4px;
}
.phone {
  position: relative;
  margin-top: 29px;
  padding: 13px 15px 14px 13px;
  border: 5px solid #000;
  border-radius: 62px;
  background: #c0c0c0;
}
.side-key {
  position: absolute;
  left: -8px;
  width: 5px;
  border-radius: 2px;
  background: #000;
}
.first {
  top: 102px;
  height: 35px;
}
.second {
  top: 162px;
  height: 60px;
}
.third {
  top: 234px;
  height: 63px;
}
.lock {
  top: 181px;
  right: -8px;
  left: auto;
  height: 60px;
}
.phone .screen {
  padding-bottom: 10px;
  border: 5px solid #000;
  border-radius: 44px;
  background: #fff;
}
.phone .status {
  display: flex;
  justify-content: space-between;
  height: 28px;
  padding: 0 24px 0 23px;
}
.time {
  margin-top: 11px;
  font-size: 11px;
  line-height: 16px;
  white-space: nowrap;
}
.notch {
  position: relative;
  display: flex;
  flex: none;
  justify-content: flex-end;
  gap: 11px;
  width: 197px;
  height: 33px;
  margin: -5px 0 0 6px;
  padding: 8px 44px 0 0;
  border: 5px solid #000;
  border-top: 0;
  border-radius: 0 0 20px 20px;
  background: #c0c0c0;
}
.speaker {
  width: 54px;
  height: 11px;
  border: 3px solid #000;
  border-radius: 5px;
}
.lens {
  width: 16px;
  height: 16px;
  margin-top: -4px;
  border: 3px solid #000;
  border-radius: 50%;
}
.signals {
  display: flex;
  align-items: center;
  gap: 6px;
  height: 12px;
  margin-top: 12px;
}
.phone .masthead {
  display: flex;
  align-items: center;
  justify-content: space-between;
  margin-top: 20px;
  padding: 0 15px;
}
.phone .banner {
  justify-content: center;
  height: 39px;
  margin: 19px 12px 0 7px;
}
.phone .image {
  width: calc(100% - 30px);
  height: 202px;
  margin: 11px 12px 0 18px;
}
.phone .rating {
  align-items: flex-start;
  gap: 12px;
  margin: 16px 0 0 27px;
}
.phone .edit {
  margin: 3px 0 0 18px;
}
.phone .delete {
  margin: 3px 0 0 10px;
}
.phone .name {
  margin: 22px 0 0 82px;
  font-size: 27px;
  line-height: 32px;
}
.phone .price {
  gap: 35px;
  margin: 22px 0 0 47px;
}
.phone .field {
  gap: 16px;
  margin: 28px 0 0 56px;
}
.phone .size {
  width: 88px;
}
.phone .field .btn {
  width: 104px;
}
.phone .quantity {
  margin-top: 11px;
}
.phone .quantity .select {
  width: 118px;
}
.phone .wish {
  margin-left: 22px;
}
.phone .buy {
  gap: 18px;
  margin: 14px 0 0 29px;
  font-size: 19px;
  line-height: 29px;
}
.phone .buy .btn {
  width: 117px;
  height: 24px;
  margin: 2px 2px 0 0;
}
.phone .footer {
  height: 96px;
  margin: 8px 24px 0 18px;
  padding: 15px 17px 0 21px;
}
.phone .social {
  justify-content: center;
  gap: 4px;
}
.phone .payments {
  gap: 27px;
  margin-top: 16px;
}
.cards {
  display: flex;
  gap: 9px;
  margin-left: auto;
}

/* Sticky notes and arrows lie over the devices */
.note {
  position: absolute;
}
.paper {
  position: absolute;
  inset: 0;
  width: 100%;
  height: 100%;
}
.tape {
  position: absolute;
  top: -13px;
  left: calc(50% - 21px);
}
.note p {
  position: relative;
  padding: 14px 0 0;
  font-size: 15px;
  line-height: 18px;
  text-align: center;
  white-space: nowrap;
}
.note p span {
  display: block;
}
.arrows {
  position: absolute;
  inset: 0;
  width: 100%;
  height: 100%;
  pointer-events: none;
}
.arrows line {
  stroke: #d22b28;
  stroke-width: 4;
}
</style>
